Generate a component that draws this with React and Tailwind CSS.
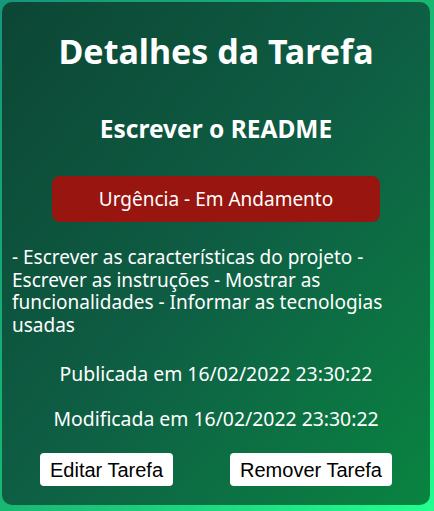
import React from 'react';

const TaskDetails = () => {
  return (
    <div className="min-h-[511px] w-full bg-gradient-to-br from-[#16967a] via-[#18b872] to-[#22ff90] pl-[2px] pt-[2px] pr-[4px] pb-[6px]">
      <div className="min-h-[503px] rounded-[10px] bg-gradient-to-br from-[#0c4634] via-[#0e5e44] to-[#098440] text-white flex flex-col" style={{ fontFamily: '"Noto Sans", sans-serif' }}>
        <h1 className="text-[34px] font-bold text-center mt-[27px] leading-[44px]">Detalhes da Tarefa</h1>
        <h2 className="text-[24.5px] font-bold text-center mt-[41px] leading-[30px]">Escrever o README</h2>
        <div className="mx-auto mt-[32px] w-[328px] h-[46px] rounded-[8px] bg-[#98160f] flex items-center justify-center text-[19px]">
          Urgência - Em Andamento
        </div>
        <p className="mt-[24px] px-[10px] text-[19px] leading-[22.5px]">
          - Escrever as características do projeto - Escrever as instruções - Mostrar as funcionalidades - Informar as tecnologias usadas
        </p>
        <p className="text-center text-[19.4px] mt-[26px] leading-[24px]">Publicada em 16/02/2022 23:30:22</p>
        <p className="text-center text-[19.4px] mt-[21px] leading-[24px]">Modificada em 16/02/2022 23:30:22</p>
        <div className="flex justify-center gap-[57px] mt-[22px]">
          <button className="bg-white text-black rounded-[4px] h-[33px] px-[10px] text-[20px]" style={{ fontFamily: '"Liberation Sans", Arial, sans-serif' }}>
            Editar Tarefa
          </button>
          <button className="bg-white text-black rounded-[4px] h-[33px] px-[10px] text-[20px]" style={{ fontFamily: '"Liberation Sans", Arial, sans-serif' }}>
            Remover Tarefa
          </button>
        </div>
      </div>
    </div>
  );
};

export default function App() {
  return <TaskDetails />;
}
